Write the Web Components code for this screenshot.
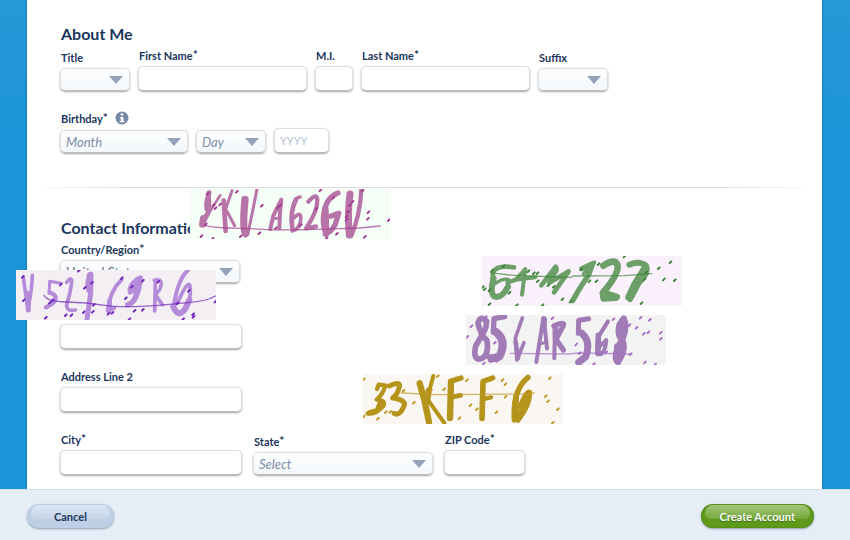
<!DOCTYPE html>
<html lang="en">
<head>
<meta charset="utf-8">
<title>Create Account</title>
<style>
  html, body { height: 100%; margin: 0; }
  body { font-family: Lato, "Liberation Sans", sans-serif; color: #1b365c; overflow: hidden; }
</style>
</head>
<body>
<account-page></account-page>
<script>
class UiField extends HTMLElement {
  constructor() {
    super();
    const kind = this.getAttribute('kind') || 'input';
    const label = this.getAttribute('label') || '';
    const value = this.getAttribute('value') || '';
    const name = this.getAttribute('name') || label;
    const star = this.hasAttribute('required') ? '<sup>*</sup>' : '';
    const aria = label ? '' : ` aria-label="${name}"`;
    const control = kind === 'select'
      ? `<div class="pick"><select id="c"${aria} class="${this.hasAttribute('chosen') ? 'chosen' : ''}"><option>${value}</option></select>
         <svg width="14" height="8" viewBox="0 0 14 8" aria-hidden="true"><path d="M0 0H14L7 8Z" fill="#94a3ba"/></svg></div>`
      : `<input id="c" type="text"${aria} placeholder="${value}">`;
    this.attachShadow({ mode: 'open' }).innerHTML = `
      <style>
        :host { display: block; flex: 0 1 auto; min-width: 0; }
        label { display: block; height: 14px; line-height: 14px; margin-bottom: 3px; padding-left: 1px; font-size: 11px; font-weight: 700; white-space: nowrap; }
        sup { font-size: 12px; line-height: 0; vertical-align: 1px; }
        input, select { box-sizing: border-box; width: 100%; margin: 0; border: 1px solid #dcdfe1; border-bottom-color: #b9bec0;
          border-radius: 5px; font: 12px Lato, "Liberation Sans", sans-serif; color: #1b365c; outline: 0;
          box-shadow: 0 1px 2px rgba(0,0,0,.36); }
        input { height: 25px; padding: 0 5px; background: #fff; display: block; }
        input::placeholder { color: #b4c0cf; font-size: 11px; opacity: 1; }
        .pick { display: grid; align-items: center; }
        .pick > * { grid-area: 1 / 1; }
        select { height: 23px; padding: 0 5px; appearance: none; background: linear-gradient(#fff, #f2f7fb); color: #7d8ea8; font-style: italic; font-size: 13px; }
        .chosen { font-style: normal; font-size: 13px; color: #5e6b7d; }
        svg { justify-self: end; margin: 1px 7px 0 0; pointer-events: none; }
      </style>
      ${label ? `<label for="c">${label}${star}</label>` : ''}${control}`;
  }
}
customElements.define('ui-field', UiField);

class FieldRow extends HTMLElement {
  constructor() {
    super();
    this.attachShadow({ mode: 'open' }).innerHTML = `
      <style>:host { display: flex; align-items: flex-end; gap: var(--gap, 8px); }</style><slot></slot>`;
  }
}
customElements.define('field-row', FieldRow);

class PillButton extends HTMLElement {
  constructor() {
    super();
    const go = this.hasAttribute('primary');
    this.attachShadow({ mode: 'open' }).innerHTML = `
      <style>
        :host { display: block; }
        button { position: relative; box-sizing: border-box; height: 24px; padding: 0 ${go ? 19 : 27}px; border: 0; border-radius: 12px;
          font: 700 11px Lato, "Liberation Sans", sans-serif; white-space: nowrap;
          color: ${go ? '#fff' : '#1b365c'}; background: ${go ? '#5f9a1a' : '#bdcfe5'};
          box-shadow: 0 1px 2px rgba(60,80,110,.5)${go ? ', inset 0 0 2px #447a0a' : ''}; }
        button::before { content: ""; position: absolute; inset: 1px 4px 9px; border-radius: 9px 9px 6px 6px;
          background: linear-gradient(${go ? '#a3c67c, #74a83b' : '#dce6f1, #c5d4e8'}); }
        span { position: relative; ${go ? 'text-shadow: 0 1px 1px #3c6b0c;' : ''} }
      </style><button type="button"><span><slot></slot></span></button>`;
  }
}
customElements.define('pill-button', PillButton);

/* Scribbled image tile: brush strokes, a thin wavy line and scattered specks. */
const scribbles = {
  plum: { box: '0 12 600 150', bg: '#f5fff8', ink: '#b874a8', dot: '#a33c90', line: 'M45 122C90 133 160 128 220 133S430 131 510 129Q540 126 571 123',
    strokes: [[15,'M57 23L50 60L60 72L37 116'],[8,'M91 31L64 72'],[20,'M54 45L53 70M40 100L37 118'],[14,'M101 46L107 138'],[9,'M126 17L107 72L134 122'],[22,'M165 43Q156 138 167 146'],[9,'M201 12Q188 80 174 144'],
      [12,'M241 132L250 92L274 44L270 80L268 130'],[8,'M250 102L270 98'],[14,'M318 43Q299 80 307 130'],[11,'M330 36Q314 38 309 70M310 100Q336 74 332 105Q328 134 307 138'],
      [13,'M355 50Q380 22 382 44Q383 80 348 130L378 124'],[16,'M444 24Q400 40 400 110Q404 172 436 118L446 85L422 94'],[20,'M406 72L408 146'],
      [21,'M480 27Q472 82 478 150'],[13,'M514 16Q510 90 484 152']],
    dots: [[53,26],[141,20],[91,58],[71,60],[77,69],[48,118],[35,153],[68,161],[153,153],[209,144],[216,62],[264,67],[272,60],[258,129],[333,120],[380,71],[392,15],[431,38],[441,146],[410,159],[518,17],[488,50],[480,61],[475,80],[470,94],[470,104],[536,81],[534,101],[525,155],[597,105]] },
  violet: { box: '18 90 600 150', bg: '#f3eff2', ink: '#b58bd9', dot: '#7127bd', line: 'M102 166Q110 185 170 186T285 196T470 194T600 175L617 168',
    strokes: [[11,'M40 112Q46 160 54 206Q66 150 67 106'],[15,'M52 160L55 210'],[9,'M153 130L119 124L117 160'],[13,'M121 158Q149 168 128 190L108 202'],[11,'M170 127Q190 103 184 135Q180 164 170 194Q169 216 196 210'],
      [19,'M240 106Q232 138 238 150'],[15,'M243 102L242 160L231 238'],[12,'M335 119Q299 153 293 212L313 204'],[14,'M299 182L298 213'],[14,'M384 116Q355 139 360 157Q383 146 392 113Q385 187 352 196'],[14,'M378 160Q376 184 352 194'],
      [11,'M436 123L434 213M433 121Q463 113 449 149L436 164L457 194'],[12,'M534 91Q504 117 492 194'],[18,'M490 200Q506 236 526 206L538 180'],[11,'M502 190Q535 116 540 138Q546 190 516 217']],
    dots: [[39,110],[42,180],[153,133],[207,92],[246,128],[225,143],[336,114],[399,122],[366,140],[348,174],[252,194],[222,216],[249,215],[185,225],[168,225],[128,180],[120,188],[108,233],[296,221],[308,218],[374,212],[399,209],[359,237],[445,125],[537,152],[503,189],[550,222],[551,230],[520,237],[617,184]] },
  green: { box: '12 12 600 150', bg: '#fbf1fc', ink: '#6d9f69', dot: '#3b8438', line: 'M38 62Q85 70 155 72L282 76M284 72L440 71L521 65',
    strokes: [[14,'M108 46Q55 38 45 62L42 112'],[18,'M47 79Q35 120 48 133Q70 142 90 104'],[10,'M50 96Q76 76 94 84L86 108'],[12,'M88 92L112 84L142 51L132 128'],[12,'M108 84L172 76'],[14,'M190 100L233 44L236 54L216 86'],[14,'M214 92L272 58L228 121'],
      [16,'M312 50L344 35L332 68L303 113L284 146'],[10,'M316 66L350 30'],[20,'M376 41Q410 18 418 38Q426 62 375 122L416 135'],[18,'M374 126L376 140L413 138'],[18,'M454 38Q484 25 504 41Q513 62 483 91L456 141'],[19,'M499 49L469 97L451 136']],
    dots: [[43,55],[77,42],[15,105],[21,111],[35,114],[35,156],[95,122],[152,57],[168,63],[179,63],[180,87],[212,99],[228,104],[310,51],[362,36],[335,87],[356,87],[254,141],[278,148],[117,159],[194,159],[440,13],[543,48],[578,30],[558,82],[591,84],[491,153],[500,82],[505,61]] },
  lilac: { box: '12 15 600 150', bg: '#f3f3f3', ink: '#a17bb5', dot: '#a870c4', line: 'M145 130L322 132L350 129L510 132',
    strokes: [[17,'M74 34Q54 14 48 40Q54 72 75 92Q82 138 55 147Q32 150 41 108L62 72Q80 42 69 30'],[16,'M128 20L96 26L94 67'],[24,'M102 66Q136 92 112 140L88 146'],[16,'M76 138L104 149'],[11,'M181 24L160 84L165 150L186 98'],[14,'M161 96L168 144'],
      [12,'M244 25L223 156M246 28L255 116'],[18,'M246 28L244 60'],[9,'M230 102L254 97'],[12,'M279 46L277 145'],[16,'M276 48Q316 30 300 54L282 88L304 120'],[17,'M280 54L281 90'],[15,'M380 26L350 31L349 70'],[21,'M360 70Q388 95 371 140L350 157'],[12,'M438 34L408 82L405 130Q428 142 433 90L410 112'],[17,'M409 76L408 130'],
      [18,'M485 25Q462 52 473 80Q500 109 468 157Q448 139 484 82Q496 46 486 28'],[20,'M474 44L474 70M466 110L466 150']],
    dots: [[17,80],[29,48],[72,21],[99,98],[66,160],[272,24],[343,103],[354,129],[433,127],[455,27],[503,45],[524,53],[536,23],[564,29],[546,71],[560,66],[597,68],[597,86],[549,157],[580,163],[506,132],[396,162]] },
  gold: { box: '15 12 600 150', bg: '#faf6f2', ink: '#b6941b', dot: '#bf9a26', line: 'M130 69L235 74L370 73L500 72L529 69',
    strokes: [[13,'M57 57L62 44L82 46Q76 72 56 89Q84 90 76 108Q50 136 29 130'],[16,'M68 96L58 122L36 128'],[15,'M94 48Q129 32 124 50Q119 73 104 84Q150 90 136 113Q124 139 108 130'],
      [19,'M185 40L199 90L213 156'],[12,'M226 18L207 86L259 159'],[19,'M212 62L207 94'],[19,'M279 36L276 144'],[16,'M278 34L309 24'],[14,'M276 82L308 76'],[17,'M375 38L372 145'],[16,'M376 34L404 24'],[13,'M372 88L399 82'],
      [16,'M510 22Q463 60 469 150'],[18,'M474 82L472 144'],[12,'M484 112Q506 56 516 66Q519 104 480 153'],[15,'M508 80L491 122L477 145']],
    dots: [[18,27],[18,139],[60,146],[84,126],[97,125],[168,98],[240,18],[259,57],[327,30],[434,30],[443,42],[443,80],[416,126],[338,105],[357,117],[305,144],[576,24],[564,78],[571,93],[600,117],[585,158],[137,62],[219,62]] }
};
class ScribbleTile extends HTMLElement {
  constructor() {
    super();
    const s = scribbles[this.getAttribute('tone')];
    this.attachShadow({ mode: 'open' }).innerHTML = `
      <style>:host { display: block; position: absolute; width: 200px; height: 50px; background: ${s.bg}; } svg { display: block; width: 100%; height: 100%; }</style>
      <svg viewBox="${s.box}" fill="none" stroke-linecap="round" stroke-linejoin="round" aria-hidden="true">
        <g stroke="${s.ink}">${s.strokes.map(([w, d]) => `<path stroke-width="${w}" d="${d}"/>`).join('')}</g>
        <path stroke="${s.dot}" stroke-width="4" opacity=".7" d="${s.line}"/>
        <path stroke="${s.dot}" stroke-width="6" d="${s.dots.map(([x, y]) => `M${x - 3} ${y + 3}l5 -5`).join('')}"/>
      </svg>`;
  }
}
customElements.define('scribble-tile', ScribbleTile);

class AccountPage extends HTMLElement {
  constructor() {
    super();
    this.attachShadow({ mode: 'open' }).innerHTML = `
      <style>
        :host { display: flex; flex-direction: column; height: 100%; position: relative; background: linear-gradient(#2599d7, #1c94d8 30%); }
        main { flex: 1; min-height: 0; box-sizing: border-box; margin: 0 28px 0 27px; padding: 24px 33px 0; background: #fff; box-shadow: 0 0 2px rgba(0,50,100,.6); }
        h2 { margin: 0 0 5px; padding-left: 1px; font-size: 16px; line-height: 20px; font-weight: 700; white-space: nowrap; }
        hr { height: 1px; margin: 34px -27px 30px; border: 0; background: linear-gradient(90deg, transparent, #dcdcdc 12%, #dcdcdc 88%, transparent); }
        .about { margin-bottom: 20px; }
        .legend { display: flex; align-items: center; gap: 7px; height: 14px; margin-bottom: 3px; padding-left: 1px; font-size: 11px; font-weight: 700; }
        .legend sup { font-size: 12px; line-height: 0; vertical-align: 1px; }
        .xs { width: 38px; } .sm { width: 70px; } .lg { width: 169px; } .month { width: 128px; } .year { width: 55px; }
        .wide { width: 182px; } .country { width: 180px; } .zip { width: 81px; }
        .last { --gap: 11px; }
        .address { display: grid; justify-items: start; gap: 21px; }
        .address > :nth-child(2) { padding-top: 20px; }
        footer { display: flex; align-items: flex-start; justify-content: space-between; box-sizing: border-box; height: 51px; padding: 14px 36px 0 27px;
          background: #e5edf6; border-top: 1px solid #d9dee4; position: relative; }
      </style>
      <main>
        <h2>About Me</h2>
        <field-row class="about">
          <ui-field class="sm" kind="select" label="Title"></ui-field>
          <ui-field class="lg" label="First Name" required></ui-field>
          <ui-field class="xs" label="M.I."></ui-field>
          <ui-field class="lg" label="Last Name" required></ui-field>
          <ui-field class="sm" kind="select" label="Suffix"></ui-field>
        </field-row>
        <div class="legend"><span>Birthday<sup>*</sup></span>
          <svg width="14" height="14" viewBox="0 0 14 14" role="img" aria-label="Info"><circle cx="7" cy="7" r="6.5" fill="#7489a6"/><circle cx="7" cy="3.6" r="1.4" fill="#fff"/><path d="M5 6H8.4V10H9.5V11.2H4.7V10H5.8V7.2H5Z" fill="#fff"/></svg>
        </div>
        <field-row>
          <ui-field class="month" kind="select" value="Month" name="Month"></ui-field>
          <ui-field class="sm" kind="select" value="Day" name="Day"></ui-field>
          <ui-field class="year" value="YYYY" name="Year"></ui-field>
        </field-row>
        <hr>
        <h2>Contact Information</h2>
        <div class="address">
          <ui-field class="country" kind="select" label="Country/Region" value="United States" required chosen></ui-field>
          <ui-field class="wide" name="Address Line 1"></ui-field>
          <ui-field class="wide" label="Address Line 2"></ui-field>
          <field-row class="last">
            <ui-field class="wide" label="City" required></ui-field>
            <ui-field class="country" kind="select" label="State" value="Select" required></ui-field>
            <ui-field class="zip" label="ZIP Code" required></ui-field>
          </field-row>
        </div>
      </main>
      <footer><pill-button>Cancel</pill-button><pill-button primary>Create Account</pill-button></footer>
      <scribble-tile tone="plum" style="left:190px;top:189px"></scribble-tile>
      <scribble-tile tone="violet" style="left:16px;top:270px"></scribble-tile>
      <scribble-tile tone="green" style="left:482px;top:256px"></scribble-tile>
      <scribble-tile tone="lilac" style="left:466px;top:315px"></scribble-tile>
      <scribble-tile tone="gold" style="left:363px;top:374px"></scribble-tile>`;
  }
}
customElements.define('account-page', AccountPage);
</script>
</body>
</html>
